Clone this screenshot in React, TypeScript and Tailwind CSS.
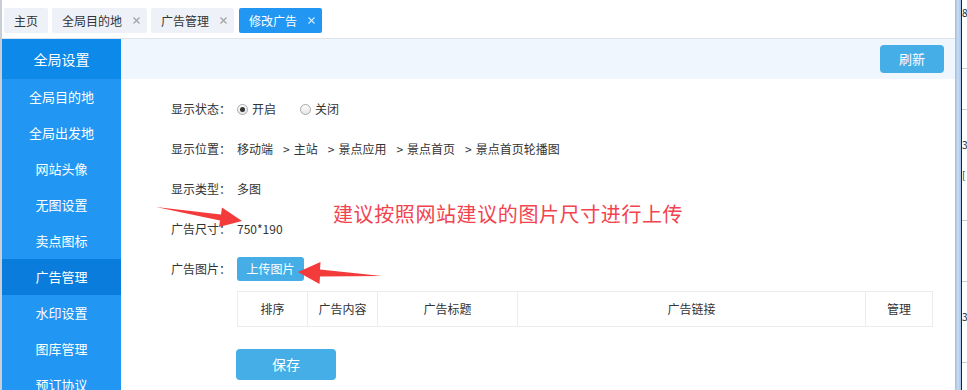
import React from "react";

const font = { fontFamily: '"Noto Sans CJK SC", "Noto Sans", sans-serif' };

const tabs = [
  { name: "主页", closable: false, active: false },
  { name: "全局目的地", closable: true, active: false },
  { name: "广告管理", closable: true, active: false },
  { name: "修改广告", closable: true, active: true },
];

const menu = [
  "全局目的地",
  "全局出发地",
  "网站头像",
  "无图设置",
  "卖点图标",
  "广告管理",
  "水印设置",
  "图库管理",
  "预订协议",
];

const crumbs = ["移动端", "主站", "景点应用", "景点首页", "景点首页轮播图"];

const columns = [
  { name: "排序", w: "w-[70px]" },
  { name: "广告内容", w: "w-[70px]" },
  { name: "广告标题", w: "w-[140px]" },
  { name: "广告链接", w: "w-[348px]" },
  { name: "管理", w: "w-[68px]" },
];

const Row: React.FC<{ label: string; children: React.ReactNode }> = ({
  label,
  children,
}) => (
  <div className="flex h-[40px] items-center">
    <span className="w-[66px] shrink-0">{label}</span>
    {children}
  </div>
);

const Radio: React.FC<{ checked?: boolean; label: string }> = ({
  checked,
  label,
}) => (
  <label className="flex items-center gap-[4px]">
    <span className="flex h-[11px] w-[11px] items-center justify-center rounded-full border border-[#a9a9a9] bg-gradient-to-b from-[#fdfdfd] to-[#e6e6e6]">
      {checked && <span className="h-[5px] w-[5px] rounded-full bg-[#333]" />}
    </span>
    <span>{label}</span>
  </label>
);

const CloseX: React.FC<{ color: string }> = ({ color }) => (
  <svg width="7" height="7" viewBox="0 0 7 7" className="ml-[11px]">
    <path d="M0.5 0.5 L6.5 6.5 M6.5 0.5 L0.5 6.5" stroke={color} strokeWidth="1.1" />
  </svg>
);

export default function App() {
  return (
    <div
      className="relative flex h-[390px] w-[967px] overflow-hidden bg-white text-[12px] text-[#333]"
      style={font}
    >
      <div className="flex w-[955px] shrink-0 flex-col border-l-2 border-[#c9ced6]">
        {/* tab bar */}
        <div className="flex h-[39px] shrink-0 items-start gap-[4px] border-b border-[#dfe3ea] pl-[2px] pt-[8px]">
          {tabs.map((t) => (
            <div
              key={t.name}
              className={
                t.active
                  ? "ml-[1px] flex h-[25px] items-center rounded-[2px] bg-[#2196f3] pl-[10px] pr-[7px] text-white"
                  : t.closable
                  ? "flex h-[25px] items-center rounded-[2px] bg-[#eef1f8] pl-[10px] pr-[7px] text-[#333]"
                  : "flex h-[25px] items-center rounded-[2px] bg-[#eef1f8] px-[10px] text-[#333]"
              }
            >
              <span>{t.name}</span>
              {t.closable && <CloseX color={t.active ? "#d6ebff" : "#a0a0a0"} />}
            </div>
          ))}
        </div>

        <div className="flex min-h-0 flex-1">
          {/* sidebar */}
          <div className="w-[119px] shrink-0 bg-[#2196f3] text-white">
            <div className="flex h-[40px] items-center justify-center bg-[#0d89e9] text-[14px]">
              全局设置
            </div>
            {menu.map((m) => (
              <div
                key={m}
                className={
                  m === "广告管理"
                    ? "flex h-[36px] items-center justify-center bg-[#0a7ddc] text-[13px]"
                    : "flex h-[36px] items-center justify-center text-[13px]"
                }
              >
                {m}
              </div>
            ))}
          </div>

          {/* content */}
          <div className="flex min-w-0 flex-1 flex-col">
            <div className="flex h-[40px] shrink-0 items-center justify-end bg-[#eff6fe] pr-[11px]">
              <button className="h-[28px] w-[64px] rounded-[4px] bg-[#45aee6] text-[13px] text-white">
                刷新
              </button>
            </div>
            <div className="pl-[50px] pt-[10px]">
              <Row label="显示状态：">
                <div className="flex items-center gap-[24px]">
                  <Radio checked label="开启" />
                  <Radio label="关闭" />
                </div>
              </Row>
              <Row label="显示位置：">
                <div className="flex items-center">
                  {crumbs.map((c, i) => (
                    <React.Fragment key={c}>
                      {i > 0 && (
                        <span className="ml-[10px] mr-[4px]">&gt;</span>
                      )}
                      <span>{c}</span>
                    </React.Fragment>
                  ))}
                </div>
              </Row>
              <Row label="显示类型：">
                <span>多图</span>
              </Row>
              <Row label="广告尺寸：">
                <span>750*190</span>
              </Row>
              <Row label="广告图片：">
                <button className="h-[24px] w-[67px] rounded-[3px] bg-[#45aee6] text-white">
                  上传图片
                </button>
              </Row>
              <div className="mt-[2px] ml-[66px] flex h-[36px] w-[696px] border border-[#ececec]">
                {columns.map((c, i) => (
                  <div
                    key={c.name}
                    className={
                      i < columns.length - 1
                        ? `${c.w} flex items-center justify-center border-r border-[#ececec]`
                        : `flex flex-1 items-center justify-center`
                    }
                  >
                    {c.name}
                  </div>
                ))}
              </div>
              <button className="mt-[22px] ml-[65px] h-[31px] w-[100px] rounded-[4px] bg-[#45aee6] text-[14px] text-white">
                保存
              </button>
            </div>
          </div>
        </div>
      </div>

      {/* window edge */}
      <div className="w-[6px] shrink-0 bg-gradient-to-r from-[#9fbde3] via-[#c9dcf3] to-[#a7c3e6]" />
      <div className="flex w-[6px] shrink-0 flex-col border-l border-[#222] bg-white text-[10px] leading-none text-[#222]">
        <div className="h-[8px]" />
        <span>8</span>
        <div className="mt-[50px] border-t border-[#ccc]" />
        <div className="mt-[40px] border-t border-[#ccc]" />
        <span className="mt-[30px]">3</span>
        <span className="mt-[20px]">[</span>
        <div className="mt-[40px] border-t border-[#ccc]" />
        <div className="mt-[60px] border-t border-[#ccc]" />
        <span className="mt-[30px]">3</span>
        <div className="mt-[40px] border-t border-[#ccc]" />
      </div>

      {/* annotation overlay */}
      <svg
        className="pointer-events-none absolute left-0 top-0"
        width="967"
        height="390"
      >
        <polygon
          points="242,221 219,227 220,220.5 156,207 221,214.5 222,207.6"
          fill="#f33b3b"
        />
        <polygon
          points="298,272 320.5,262 320,269.5 382,276 320,276.5 319.5,284"
          fill="#f33b3b"
        />
      </svg>
      <div
        className="pointer-events-none absolute left-[333px] top-[201px] text-[20px] leading-[26px] tracking-[0.6px] text-[#f2434f]"
        style={font}
      >
        建议按照网站建议的图片尺寸进行上传
      </div>
    </div>
  );
}
